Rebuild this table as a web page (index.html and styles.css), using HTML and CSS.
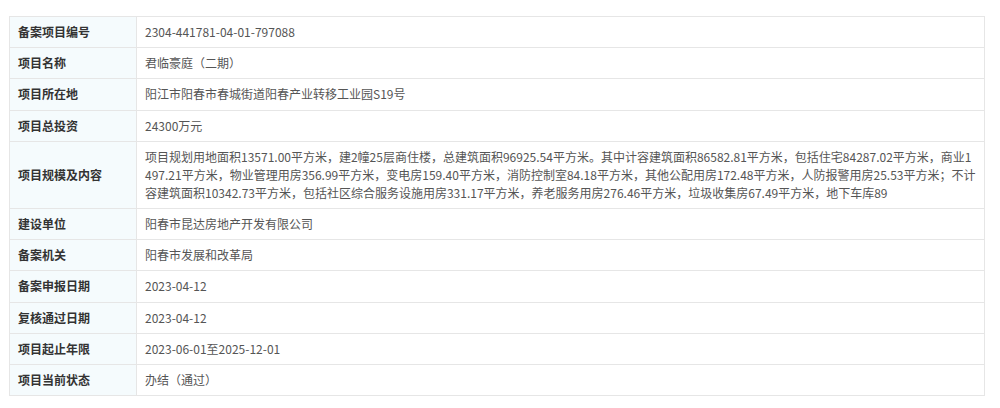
FILE: index.html
```html
<!DOCTYPE html>
<html lang="zh-CN">
  <head>
    <title>项目备案信息</title>
    <meta charset="utf-8" />
    <link rel="stylesheet" href="styles.css">
  </head>
  <body>
    <table class="info">
      <tr>
        <th>备案项目编号</th>
        <td>2304-441781-04-01-797088</td>
      </tr>
      <tr>
        <th>项目名称</th>
        <td>君临豪庭（二期）</td>
      </tr>
      <tr>
        <th>项目所在地</th>
        <td>阳江市阳春市春城街道阳春产业转移工业园S19号</td>
      </tr>
      <tr>
        <th>项目总投资</th>
        <td>24300万元</td>
      </tr>
      <tr>
        <th>项目规模及内容</th>
        <td>项目规划用地面积13571.00平方米，建2幢25层商住楼，总建筑面积96925.54平方米。其中计容建筑面积86582.81平方米，包括住宅84287.02平方米，商业1497.21平方米，物业管理用房356.99平方米，变电房159.40平方米，消防控制室84.18平方米，其他公配用房172.48平方米，人防报警用房25.53平方米；不计容建筑面积10342.73平方米，包括社区综合服务设施用房331.17平方米，养老服务用房276.46平方米，垃圾收集房67.49平方米，地下车库89</td>
      </tr>
      <tr>
        <th>建设单位</th>
        <td>阳春市昆达房地产开发有限公司</td>
      </tr>
      <tr>
        <th>备案机关</th>
        <td>阳春市发展和改革局</td>
      </tr>
      <tr>
        <th>备案申报日期</th>
        <td>2023-04-12</td>
      </tr>
      <tr>
        <th>复核通过日期</th>
        <td>2023-04-12</td>
      </tr>
      <tr>
        <th>项目起止年限</th>
        <td>2023-06-01至2025-12-01</td>
      </tr>
      <tr>
        <th>项目当前状态</th>
        <td>办结（通过）</td>
      </tr>
    </table>
  </body>
</html>
```

FILE: styles.css
```css
body {
  margin: 0;
  padding: 16px 15px 0 9px;
  background-color: #fff;
  font-family: "Noto Sans CJK SC", "Noto Sans", sans-serif;
  font-size: 12px;
}

.info {
  width: 976px;
  border-collapse: collapse;
  table-layout: fixed;
}

.info th,
.info td {
  border: 1px solid #e6e6e6;
  padding: 6.1px 8px;
  line-height: 18px;
  text-align: left;
  vertical-align: middle;
  word-break: break-all;
}

.info th {
  width: 110px;
  background-color: #f5fbfd;
  color: #333;
  font-weight: bold;
}

.info td {
  color: #555;
}
```
